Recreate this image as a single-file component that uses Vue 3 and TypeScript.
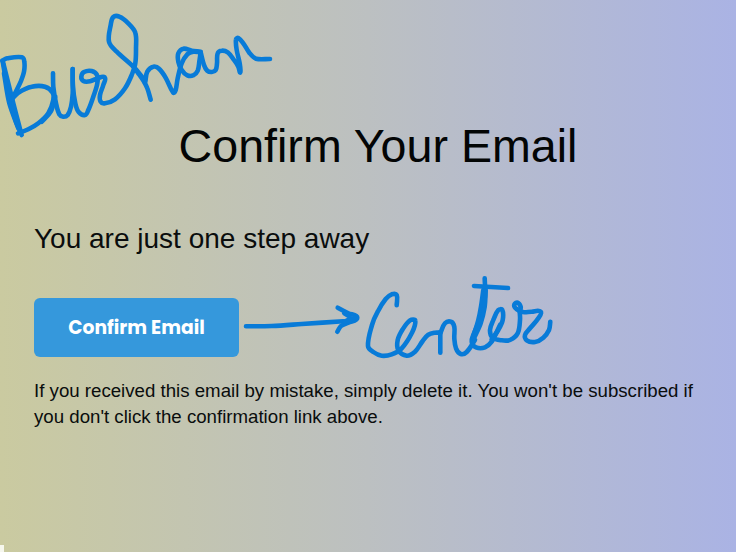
<script setup lang="ts">
type Point = [number, number]
interface Word {
  x: number
  y: number
  strokes: Point[][]
}

const title: string = 'Confirm Your Email'
const subtitle: string = 'You are just one step away'
const lines: string[] = [
  "If you received this email by mistake, simply delete it. You won't be subscribed if",
  "you don't click the confirmation link above.",
]

// Pen samples, in thirds of a pixel from each group's origin
const ink: Word[] = [
  {
    x: 0,
    y: 0,
    strokes: [
      [[7, 182], [22, 175], [66, 172], [73, 185], [72, 215], [62, 245], [40, 290]],
      [[8, 185], [18, 240], [32, 310], [48, 365], [65, 405]],
      [[10, 190], [40, 310], [62, 395]],
      [[12, 220], [28, 310], [55, 385]],
      [[35, 298], [55, 278], [95, 260], [135, 260], [158, 278], [160, 300], [145, 340], [115, 370], [85, 388], [54, 400]],
      [[166, 290], [152, 335], [125, 365]],
      [[159, 220], [160, 260], [168, 310], [178, 343], [190, 350], [203, 345], [213, 320], [218, 280], [218, 240], [218, 207]],
      [[218, 207], [219, 260], [226, 310], [236, 336], [255, 345], [265, 330], [280, 290], [292, 250], [291, 225], [275, 213], [252, 216], [244, 230], [250, 243], [270, 244], [290, 236], [314, 232], [310, 255], [300, 285], [302, 305], [315, 310], [345, 298], [375, 265], [395, 225], [406, 190], [408, 145], [406, 98], [385, 70], [358, 50], [340, 51], [332, 75], [327, 125], [350, 155], [400, 200], [432, 238]],
    ],
  },
  {
    x: 130,
    y: 0,
    strokes: [
      [[10, 200], [25, 220], [42, 245], [52, 265], [62, 299]],
      [[46, 245], [52, 215], [70, 200], [88, 207], [108, 235], [130, 278], [137, 270], [143, 235], [155, 190], [172, 163], [190, 155], [210, 157]],
      [[212, 155], [185, 152], [160, 146], [145, 160], [145, 185], [155, 210], [172, 226], [190, 226], [203, 212], [208, 185], [212, 155]],
      [[212, 157], [222, 195], [232, 212], [245, 216], [257, 210], [261, 190], [263, 160], [275, 152], [293, 157], [312, 180], [325, 200], [331, 217], [329, 190], [320, 150], [318, 118], [325, 114], [340, 130], [358, 158], [378, 176], [420, 177]],
    ],
  },
  {
    x: 235,
    y: 270,
    strokes: [
      [[33, 169], [110, 168], [200, 162], [325, 154]],
      [[308, 113], [340, 130], [367, 143], [340, 158], [318, 168], [307, 185]],
      [[328, 130], [345, 144], [330, 155], [358, 144]],
    ],
  },
  {
    x: 350,
    y: 270,
    strokes: [
      [[140, 106], [140, 75], [125, 73], [107, 87], [83, 125], [66, 165], [54, 228], [70, 246], [95, 257], [125, 253], [155, 235], [185, 190], [196, 152], [180, 151], [158, 178], [143, 210], [145, 240], [170, 257], [195, 245], [218, 213], [235, 194], [255, 188], [270, 188]],
      [[271, 186], [271, 248]],
      [[271, 190], [285, 160], [303, 155], [313, 170], [313, 205], [318, 235], [332, 252], [350, 246], [375, 210]],
      [[404, 25], [405, 80], [390, 145], [372, 190], [365, 215], [378, 232], [405, 232], [425, 215], [450, 165]],
      [[400, 60], [393, 110], [385, 150], [368, 205]],
      [[407, 60], [404, 110], [392, 160], [372, 205]],
      [[372, 48], [474, 54]],
      [[425, 208], [445, 180], [458, 150], [457, 120], [445, 120], [430, 150], [420, 180], [428, 203], [455, 211], [480, 210], [503, 190], [510, 150], [509, 125]],
      [[512, 125], [497, 115], [493, 104], [503, 98], [512, 110], [513, 125], [545, 125], [572, 125], [565, 145], [540, 175], [525, 195], [530, 211], [555, 216], [580, 203], [597, 180], [601, 155]],
    ],
  },
]

// Runs a smooth curve through the samples of one stroke
function smooth(points: Point[], ox: number, oy: number): string {
  const pts = points.map(([x, y]): Point => [ox + x / 3, oy + y / 3])
  let d = `M${pts[0][0].toFixed(1)} ${pts[0][1].toFixed(1)}`
  for (let i = 0; i < pts.length - 1; i++) {
    const a = pts[Math.max(i - 1, 0)]
    const b = pts[i]
    const c = pts[i + 1]
    const e = pts[Math.min(i + 2, pts.length - 1)]
    const len = Math.hypot(c[0] - b[0], c[1] - b[1])
    const t1 = Math.min(len / 3 / (Math.hypot(c[0] - a[0], c[1] - a[1]) || 1), 0.4)
    const t2 = Math.min(len / 3 / (Math.hypot(e[0] - b[0], e[1] - b[1]) || 1), 0.4)
    const v = [
      b[0] + (c[0] - a[0]) * t1,
      b[1] + (c[1] - a[1]) * t1,
      c[0] - (e[0] - b[0]) * t2,
      c[1] - (e[1] - b[1]) * t2,
      c[0],
      c[1],
    ]
    d += 'C' + v.map((n) => n.toFixed(1)).join(' ')
  }
  return d
}

const paths: string[] = ink.flatMap((w) => w.strokes.map((s) => smooth(s, w.x, w.y)))
</script>

<template>
  <main class="page">
    <h1>{{ title }}</h1>
    <h2>{{ subtitle }}</h2>
    <button class="confirm" type="button">Confirm Email</button>
    <p class="note">
      <span v-for="line in lines" :key="line">{{ line }}</span>
    </p>
    <svg class="ink" viewBox="0 0 736 552" aria-hidden="true">
      <path v-for="(d, i) in paths" :key="i" :d="d" />
    </svg>
    <i class="corner"></i>
  </main>
</template>

<style>
body {
  margin: 0;
}
</style>

<style scoped>
.page {
  position: relative;
  box-sizing: border-box;
  width: 736px;
  height: 552px;
  padding: 118px 34px 0;
  overflow: hidden;
  display: flex;
  flex-direction: column;
  align-items: flex-start;
  font-family: "Liberation Sans", Arial, sans-serif;
  color: #0a0d0d;
  background: linear-gradient(90deg, #cacaa0 0%, #bcc0c1 50%, #aab3e4 100%);
}
h1 {
  align-self: center;
  margin: 0 0 0 20px;
  color: #030505;
  font-size: 46.6px;
  font-weight: 400;
  line-height: 56px;
  white-space: nowrap;
}
h2 {
  margin: 47px 0 0;
  font-size: 28px;
  font-weight: 400;
  line-height: 36px;
  white-space: nowrap;
}
.confirm {
  width: 205px;
  height: 59px;
  margin: 41px 0 0;
  padding: 0;
  border: 0;
  border-radius: 6px;
  background: #3598dc;
  color: #fff;
  font-family: Poppins, Inter, sans-serif;
  font-size: 18.7px;
  font-weight: 700;
}
.note {
  display: flex;
  flex-direction: column;
  margin: 21px 0 0;
  font-size: 18.67px;
  line-height: 26px;
  white-space: nowrap;
}
.ink {
  position: absolute;
  inset: 0;
  width: 736px;
  height: 552px;
  fill: none;
  stroke: #087bd8;
  stroke-width: 4.6;
  stroke-linecap: round;
  stroke-linejoin: round;
  pointer-events: none;
}
.corner {
  position: absolute;
  left: 0;
  bottom: 0;
  width: 4px;
  height: 7px;
  background: #f6f7ee;
}
</style>
